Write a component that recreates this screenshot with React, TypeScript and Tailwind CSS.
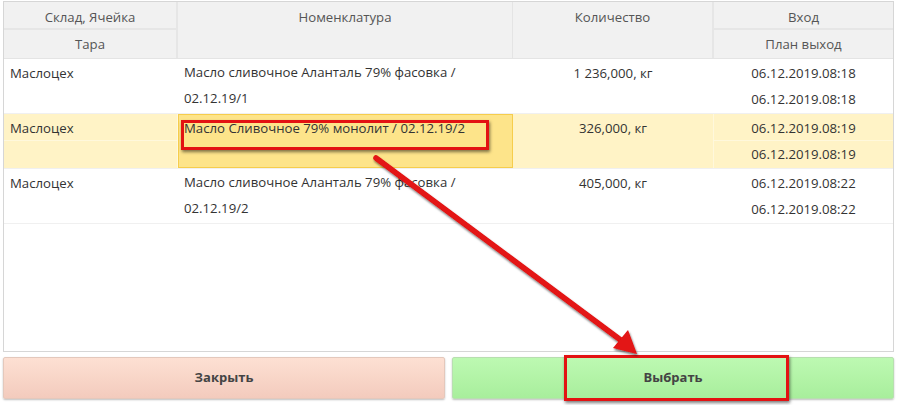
const rows = [
  { place: 'Маслоцех', name: ['Масло сливочное Аланталь 79% фасовка /', '02.12.19/1'], qty: '1 236,000, кг', inDate: '06.12.2019.08:18', outDate: '06.12.2019.08:18', selected: false },
  { place: 'Маслоцех', name: ['Масло Сливочное 79% монолит / 02.12.19/2'], qty: '326,000, кг', inDate: '06.12.2019.08:19', outDate: '06.12.2019.08:19', selected: true },
  { place: 'Маслоцех', name: ['Масло сливочное Аланталь 79% фасовка /', '02.12.19/2'], qty: '405,000, кг', inDate: '06.12.2019.08:22', outDate: '06.12.2019.08:22', selected: false },
];

function Row({ r }: { r: (typeof rows)[number] }) {
  const line = r.selected ? 'border-[#fff8dc]' : 'border-white';
  return (
    <div className={`flex h-[55px] border-b border-[#f0f0f0] ${r.selected ? 'bg-[#fff3c6]' : 'bg-white'}`}>
      <div className={`w-[174px] flex flex-col border-r ${line}`}>
        <div className={`h-[27px] pl-[6px] pt-[5px] border-b ${line}`}>{r.place}</div>
      </div>
      {r.selected ? (
        <div className="w-[335px] border border-[#f6cd4c] bg-[#fde48a] pl-[5px] pt-[4px]">{r.name[0]}</div>
      ) : (
        <div className={`w-[335px] pl-[6px] leading-[26px] border-r ${line}`}>
          {r.name.map((n) => (
            <div key={n}>{n}</div>
          ))}
        </div>
      )}
      <div className={`w-[201px] text-center pt-[5px] border-r ${line}`}>{r.qty}</div>
      <div className="w-[179px] flex flex-col text-center">
        <div className={`h-[27px] pt-[5px] border-b ${line}`}>{r.inDate}</div>
        <div className="h-[27px] pt-[4px]">{r.outDate}</div>
      </div>
    </div>
  );
}

export default function App() {
  return (
    <div
      className="relative w-[899px] h-[405px] bg-white text-[13.2px] text-[#333]"
      style={{ fontFamily: '"Segoe UI", "Open Sans", "Noto Sans", sans-serif' }}
    >
      <div className="ml-[3px] mt-[1px] w-[891px] h-[351px] border border-[#d6d6d6] bg-white">
        <div className="flex bg-[#f1f1f1] text-[#555] text-center border-b border-[#e4e4e4]">
          <div className="w-[174px] border-r-2 border-[#e6e6e6]">
            <div className="h-[28px] pt-[6px] border-b-2 border-[#e6e6e6]">Склад, Ячейка</div>
            <div className="h-[28px] pt-[5px]">Тара</div>
          </div>
          <div className="w-[335px] h-[56px] pt-[6px] border-r border-[#e4e4e4]">Номенклатура</div>
          <div className="w-[201px] pt-[6px] border-r-2 border-[#e6e6e6]">Количество</div>
          <div className="w-[179px]">
            <div className="h-[28px] pt-[6px] border-b-2 border-[#e6e6e6]">Вход</div>
            <div className="h-[28px] pt-[5px]">План выход</div>
          </div>
        </div>
        {rows.map((r, i) => (
          <Row key={i} r={r} />
        ))}
      </div>

      <div className="flex gap-[7px] ml-[3px] mt-[5px] w-[891px]">
        <button className="w-[442px] h-[42px] rounded-[2px] border border-[#e4c8bc] bg-gradient-to-b from-[#fde0d3] to-[#f3cbbd] shadow-[0_1px_2px_rgba(0,0,0,0.25)] font-bold text-[13px] text-[#444]">
          Закрыть
        </button>
        <button className="w-[442px] h-[42px] rounded-[2px] border border-[#b8dfb0] bg-gradient-to-b from-[#bdf9b2] to-[#a8ee9c] shadow-[0_1px_2px_rgba(0,0,0,0.25)] font-bold text-[13px] text-[#444]">
          Выбрать
        </button>
      </div>

      <div className="absolute left-[181px] top-[119px] w-[308px] h-[30px] border-[3px] border-[#e31212] shadow-[1px_2px_3px_rgba(0,0,0,0.5)]" />
      <div className="absolute left-[564px] top-[354px] w-[225px] h-[46px] border-[3px] border-[#e31212] shadow-[1px_2px_3px_rgba(0,0,0,0.5)]" />

      <svg className="absolute inset-0 pointer-events-none" width="899" height="405">
        <defs>
          <filter id="sh" x="-10%" y="-10%" width="120%" height="120%">
            <feDropShadow dx="1" dy="2" stdDeviation="1.2" floodColor="#000" floodOpacity="0.55" />
          </filter>
        </defs>
        <g filter="url(#sh)">
          <line x1="376" y1="157" x2="622" y2="340" stroke="#e31212" strokeWidth="5.5" strokeLinecap="round" />
          <polygon points="637,353 613,347 628,329" fill="#e31212" />
        </g>
      </svg>
    </div>
  );
}
